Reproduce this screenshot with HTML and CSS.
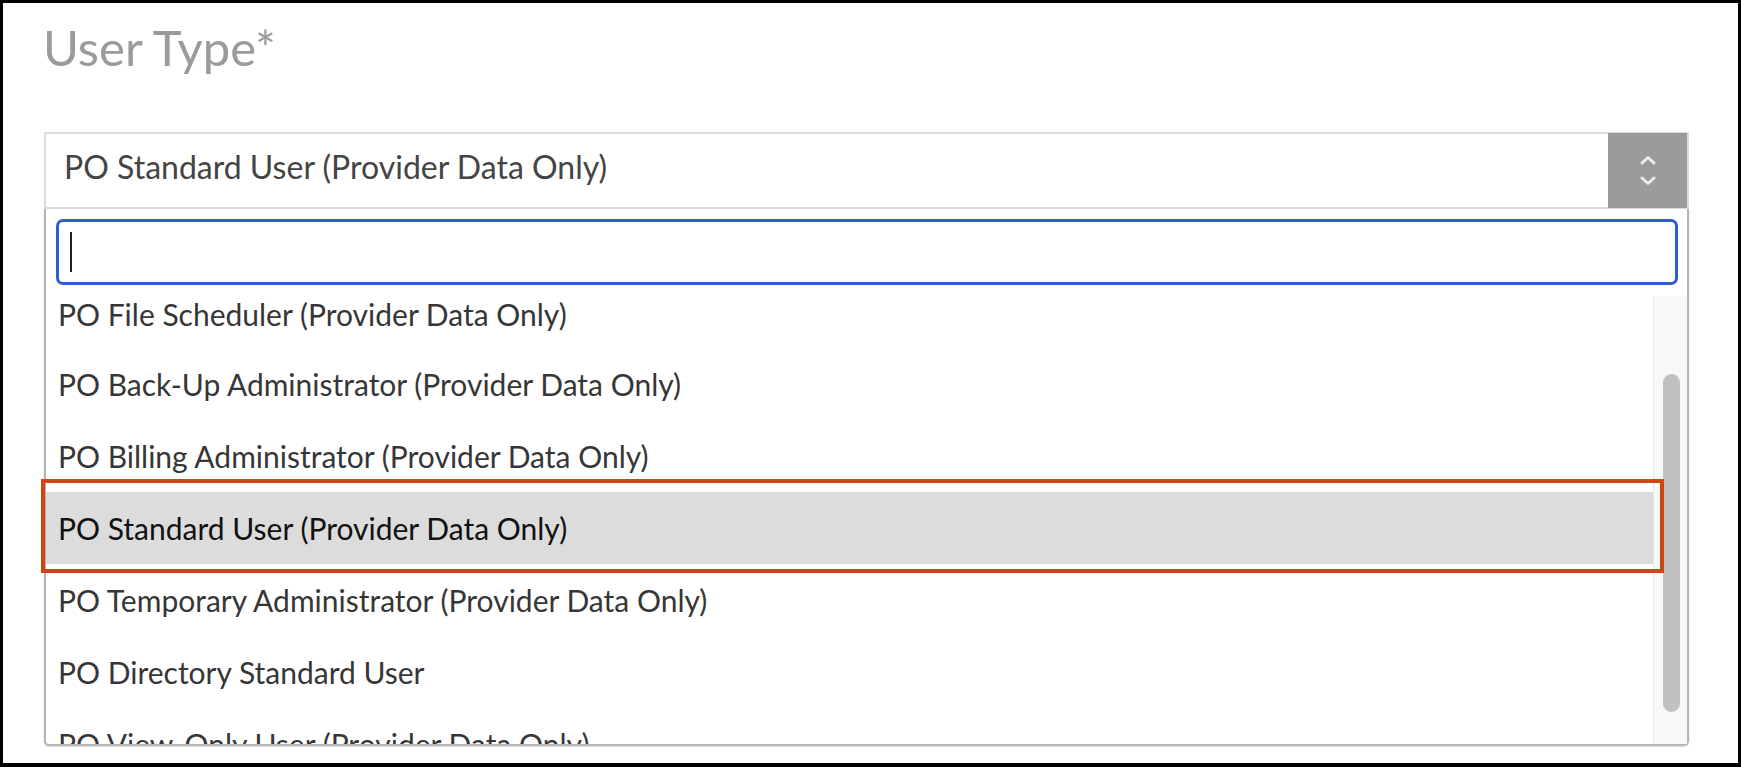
FILE: index.html
```html
<!DOCTYPE html>
<html lang="en">
  <head>
    <meta charset="utf-8">
    <title>User Type</title>
    <link rel="stylesheet" href="styles.css">
  </head>

  <body>
    <div class="frame">
      <div class="field">

        <h2 class="label">User Type*</h2>

        <!-- closed select showing the current value -->
        <div class="select">
          <span class="value">PO Standard User (Provider Data Only)</span>
          <span class="arrows">
            <svg width="20" height="38" viewBox="0 0 20 38">
              <path d="M4 12 L10 6.5 L16 12" fill="none" stroke="#ececec" stroke-width="3" stroke-linecap="round" stroke-linejoin="round"/>
              <path d="M4 27 L10 32.5 L16 27" fill="none" stroke="#ececec" stroke-width="3" stroke-linecap="round" stroke-linejoin="round"/>
            </svg>
          </span>
        </div>

        <!-- open list -->
        <div class="dropdown">
          <div class="search"><span class="caret"></span></div>
          <div class="listwrap">
            <ul class="options">
              <li>PO File Scheduler (Provider Data Only)</li>
              <li>PO Back-Up Administrator (Provider Data Only)</li>
              <li>PO Billing Administrator (Provider Data Only)</li>
              <li class="active">PO Standard User (Provider Data Only)<span class="mark"></span></li>
              <li>PO Temporary Administrator (Provider Data Only)</li>
              <li>PO Directory Standard User</li>
              <li>PO View-Only User (Provider Data Only)</li>
            </ul>
            <div class="track"><div class="thumb"></div></div>
          </div>
        </div>

      </div>
    </div>
  </body>
</html>
```

FILE: styles.css
```css
html, body   {  margin: 0;  padding: 0;  background: #fff;  }
.frame       {  height: 767px;  box-sizing: border-box;  border: 3px solid #000;  border-bottom-width: 4px;  overflow: hidden;  }
.field       {  padding: 16px 49px 0 41px;  font-family: Lato, "Liberation Sans", sans-serif;  }

.label       {  margin: 0 0 57px -1px;  font-size: 49px;  line-height: 56px;  font-weight: normal;  color: #9b9b9b;  }

.select      {  display: flex;  align-items: center;  height: 77px;  box-sizing: border-box;  border: 2px solid #dcdcdc;  background: #fff;  }
.select .value {  flex: 1;  padding: 0 0 8px 18px;  font-size: 32px;  color: #444;  }
.arrows      {  width: 79px;  height: 75px;  margin-top: -1px;  background: #9b9b9b;  display: flex;  align-items: center;  justify-content: center;  }
.arrows svg  {  display: block;  }

.dropdown    {  height: 537px;  box-sizing: border-box;  border: 2px solid #b4b4b4;  border-top: 0;  border-radius: 0 0 5px 5px;  box-shadow: 0 1px 2px rgba(0,0,0,0.15);  display: flex;  flex-direction: column;  }
.search      {  margin: 10px 9px 11px 10px;  height: 66px;  box-sizing: border-box;  border: 3px solid #2c5fc8;  border-radius: 7px;  padding: 10px 0 0 11px;  }
.caret       {  display: block;  width: 2px;  height: 40px;  background: #222;  }

.listwrap    {  flex: 1;  display: flex;  min-height: 0;  }
.options     {  flex: 1;  list-style: none;  margin: 0;  padding: 0;  overflow-x: visible;  overflow-y: clip;  font-size: 30px;  color: #363636;  }
.options li  {  height: 72px;  line-height: 72px;  padding-left: 12px;  white-space: nowrap;  }
/* list is scrolled a little: first row shows only its lower part */
.options li:first-child {  height: 52px;  line-height: 36px;  }
.options li.active {  position: relative;  background: #dcdcdc;  color: #111;  }
.mark        {  position: absolute;  top: -13px;  bottom: -9px;  left: -5px;  right: -11px;  border: 4px solid #cf4516;  }

.track       {  width: 33px;  border-left: 1px solid #e6e6e6;  background: #f8f8f8;  }
.thumb       {  width: 17px;  height: 338px;  margin: 78px 0 0 9px;  border-radius: 9px;  background: #c1c1c1;  }
```
